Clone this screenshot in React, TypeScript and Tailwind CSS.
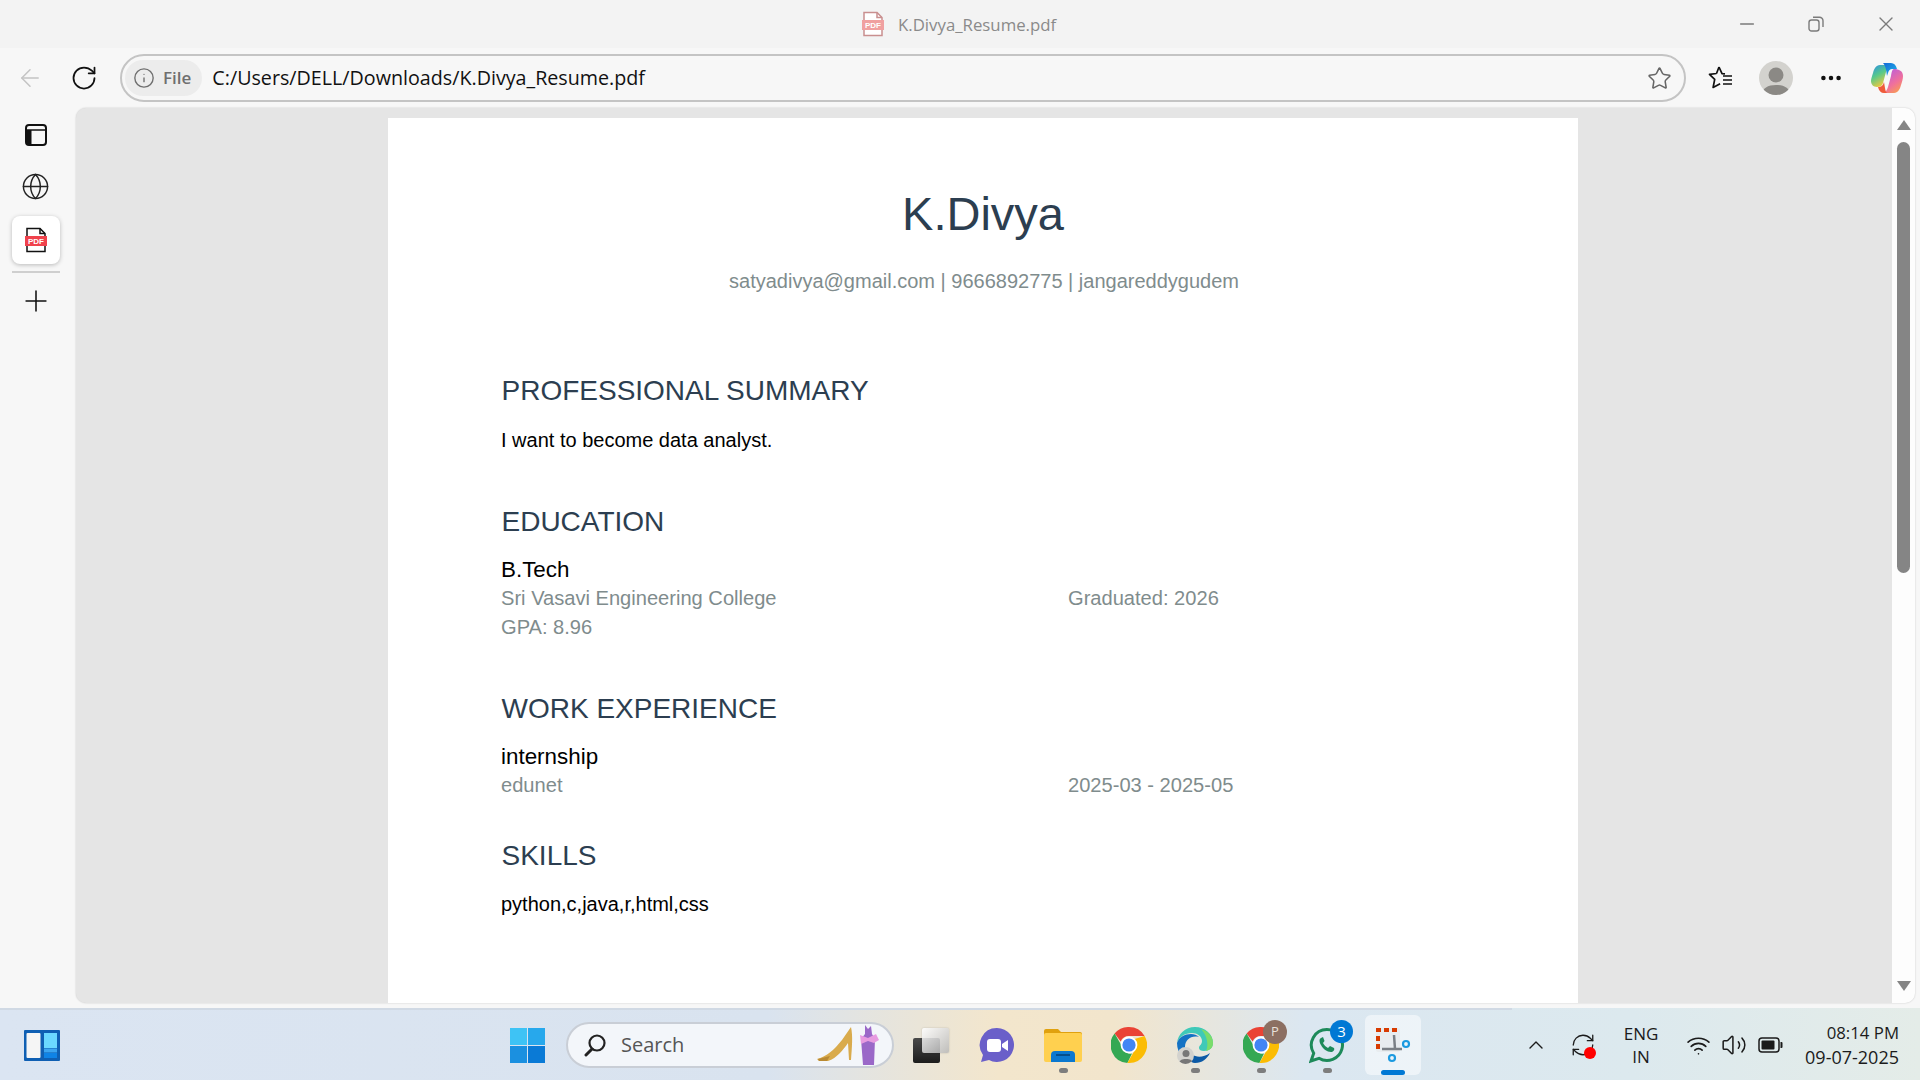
import { ArrowLeft, RotateCw, RefreshCw, Info, Star, Globe, Plus, X, Minus, ChevronUp, Wifi, Volume2, MoreHorizontal } from 'lucide-react'
import type { ReactNode } from 'react'

const uiFont = 'font-["Open_Sans",sans-serif]'

const PdfBadge = ({ muted = false }: { muted?: boolean }) => (
  <svg width="24" height="26" viewBox="0 0 24 26" fill="none">
    <path d="M3 1.500h13l5 5v18H3z" fill="#fff" stroke={muted ? '#c98f8f' : '#111'} strokeWidth="1.500" />
    <path d="M16 1.500v5h5" stroke={muted ? '#c98f8f' : '#111'} strokeWidth="1.500" />
    <rect x="1" y="9" width="22" height="10" fill={muted ? '#f0a0a0' : '#f0424c'} />
    <text x="12" y="17" textAnchor="middle" fontSize="8" fontWeight="700" fontFamily="'Liberation Sans', sans-serif" fill="#fff">PDF</text>
  </svg>
)

const Copilot = () => (
  <svg width="34" height="32" viewBox="0 0 34 32">
    <defs>
      <linearGradient id="cpA" x1="0" y1="0" x2="0.5" y2="1">
        <stop offset="0" stopColor="#2a8fe8" />
        <stop offset="0.5" stopColor="#57c98a" />
        <stop offset="1" stopColor="#f5c93c" />
      </linearGradient>
      <linearGradient id="cpB" x1="0.2" y1="0" x2="0.8" y2="1">
        <stop offset="0" stopColor="#b65ce0" />
        <stop offset="0.6" stopColor="#f0709c" />
        <stop offset="1" stopColor="#f9a04c" />
      </linearGradient>
      <linearGradient id="cpC" x1="0" y1="0" x2="1" y2="1">
        <stop offset="0" stopColor="#1468d8" />
        <stop offset="1" stopColor="#22b8e8" />
      </linearGradient>
    </defs>
    <path d="M10 3h10c-2 1-3 3-4 7l-3 11c-1 3-3 4-6 4-4 0-6-3-6-6 0-2 1-5 2-8 1-4 3-8 7-8z" fill="url(#cpA)" />
    <path d="M24 7c5 0 9 2 9 7 0 3-1 6-2 9-1 4-3 8-7 8H13c3-1 4-3 5-6l3-11c.5-3 1-7 3-7z" fill="url(#cpB)" />
    <path d="M13 1h8c3 0 5 2 6 6h-5c-2 0-3 1-4 4l-1 3c-.5-4-1-10-4-13z" fill="url(#cpC)" />
    <path d="M8 25c3 0 5-1 6-5l1 6c.5 3 1 5 3 5h-4c-3 0-5-2-6-6z" fill="#ef5b3a" />
  </svg>
)

const ChromeIcon = () => (
  <svg width="36" height="36" viewBox="0 0 36 36">
    <path d="M18 0a18 18 0 0 1 15.600 9H18a9 9 0 0 0-8.300 5.500L3.600 6.600A18 18 0 0 1 18 0z" fill="#ea4335" />
    <path d="M3.600 6.600l7.900 13.600A8 8 0 0 0 21 26.500l-4.600 9.400A18 18 0 0 1 3.600 6.600z" fill="#34a853" />
    <path d="M33.600 9A18 18 0 0 1 16.400 35.900l7.900-13.600A8 8 0 0 0 23.600 12z" fill="#fbbc04" />
    <circle cx="18" cy="18" r="8.400" fill="#fff" />
    <circle cx="18" cy="18" r="6.600" fill="#4285f4" />
  </svg>
)

const TaskIcon = ({ children, dot = false, active = false }: { children: ReactNode; dot?: boolean; active?: boolean }) => (
  <div className={`relative mx-[5px] flex h-[60px] w-[56px] items-center justify-center rounded-md ${active ? 'bg-white/50' : ''}`}>
    {children}
    {dot && <span className="absolute bottom-[2px] h-[5px] w-[9px] rounded-full bg-[#7d7d7d]" />}
    {active && <span className="absolute bottom-0 h-[5px] w-[24px] rounded-full bg-[#0078d4]" />}
  </div>
)

const Section = ({ title, className, children }: { title: string; className: string; children: ReactNode }) => (
  <section>
    <h2 className={`pl-[0.5px] text-[28px] leading-[32px] text-[#2c3e50] ${className}`}>{title}</h2>
    {children}
  </section>
)

const Entry = ({ title, sub, right, extra }: { title: string; sub: string; right: string; extra?: string }) => (
  <div className="mt-[17px] leading-[29px]">
    <div className="text-[22.4px] text-black">{title}</div>
    <div className="grid grid-cols-[567px_1fr] text-[20.1px] text-[#7f8c8d]">
      <span>{sub}</span>
      <span>{right}</span>
    </div>
    {extra && <div className="text-[20.1px] text-[#7f8c8d]">{extra}</div>}
  </div>
)

export default function App() {
  return (
    <div className={`flex h-[1080px] w-[1920px] flex-col overflow-hidden bg-[#f7f7f7] ${uiFont}`}>
      {/* Title bar */}
      <header className="flex h-12 shrink-0 items-center bg-[#f3f3f3]">
        <div className="flex flex-1 items-center pl-[861px]">
          <PdfBadge muted />
          <span className="ml-[13px] pt-[2px] text-[16.8px] text-[#8a8a8a]">K.Divya_Resume.pdf</span>
        </div>
        <div className="flex items-center pr-[22px] text-[#7b7b7b]">
          <Minus size={22} strokeWidth={1.4} />
          <svg className="ml-[50px]" width="16" height="16" viewBox="0 0 16 16" fill="none" stroke="currentColor" strokeWidth="1.400">
            <rect x="1" y="4" width="10" height="11" rx="2.500" />
            <path d="M5 1.200h6.500A3.500 3.500 0 0 1 15 4.700V11" />
          </svg>
          <X className="ml-[50px]" size={24} strokeWidth={1.4} />
        </div>
      </header>

      {/* Toolbar */}
      <div className="flex h-[60px] shrink-0 items-center">
        <ArrowLeft className="ml-[16px] text-[#c4c4c4]" size={28} strokeWidth={1.3} />
        <RotateCw className="ml-[26px] text-[#111]" size={28} strokeWidth={1.5} />
        <div className="ml-[22px] flex h-[48px] w-[1566px] items-center rounded-full border-2 border-[#c4c4c4] bg-[#f7f7f7] pl-[3px] pr-[12px]">
          <div className="flex h-[36px] items-center gap-[8px] rounded-full bg-[#ececec] px-[8px] text-[#6f6f6f]">
            <Info size={22} strokeWidth={1.5} />
            <span className="pr-[3px] text-[17px] font-semibold">File</span>
          </div>
          <span className="ml-[10px] flex-1 text-[19.7px] text-[#111]">C:/Users/DELL/Downloads/K.Divya_Resume.pdf</span>
          <Star className="text-[#666]" size={25} strokeWidth={1.5} />
        </div>
        <svg className="ml-[22px]" width="26" height="26" viewBox="0 0 26 26" fill="none" stroke="#111" strokeWidth="1.700">
          <path d="M11 2l3 6.600 3 .3M8.500 8.500l-7 .8 5.200 5-1.600 8.200 7-3.800M11 2L8.500 8.500" strokeLinejoin="round" />
          <path d="M15 11h9M15 15h9M15 19h9" />
        </svg>
        <div className="ml-[25px] flex h-[34px] w-[34px] items-end justify-center overflow-hidden rounded-full bg-[#d3d2ce]">
          <svg width="30" height="30" viewBox="0 0 30 30" fill="#8b8985">
            <circle cx="15" cy="10" r="7.500" />
            <path d="M1 30c0-7 6-10 14-10s14 3 14 10z" />
          </svg>
        </div>
        <MoreHorizontal className="ml-[25px] text-[#111]" size={26} strokeWidth={2.2} />
        <div className="ml-[26px]">
          <Copilot />
        </div>
      </div>

      {/* Body */}
      <div className="flex min-h-0 flex-1">
        <aside className="flex w-[76px] shrink-0 flex-col items-center pr-[5px]">
          <svg className="mt-[16px]" width="22" height="22" viewBox="0 0 22 22" fill="none" stroke="#111" strokeWidth="2">
            <rect x="1" y="1" width="20" height="20" rx="3" />
            <path d="M2 6h18" strokeWidth="1.500" />
            <rect x="1.500" y="6" width="5" height="14" fill="#111" stroke="none" />
          </svg>
          <Globe className="mt-[26px]" size={29} strokeWidth={1.2} color="#222" />
          <div className="mt-[15px] flex h-[48px] w-[48px] items-center justify-center rounded-lg bg-white shadow-[0_1px_4px_rgba(0,0,0,0.25)]">
            <PdfBadge />
          </div>
          <div className="mt-[7px] h-[2px] w-[48px] bg-[#cfcfcf]" />
          <Plus className="mt-[11px] text-[#111]" size={34} strokeWidth={1.1} />
        </aside>

        <main className="mb-[5px] mr-[5px] flex min-w-0 flex-1 overflow-hidden rounded-[10px] bg-[#e5e5e5] shadow-[0_0_2px_rgba(0,0,0,0.2)]">
          <div className="flex min-w-0 flex-1 justify-start pl-[312px] pt-[10px]">
            <article className='h-full w-[1190px] bg-white pl-[113px] pt-[72px] font-["Liberation_Sans",Arial,sans-serif]'>
              <div className="w-[966px] text-center">
                <h1 className="pr-[2px] text-[47px] leading-[48px] text-[#2c3e50]">K.Divya</h1>
                <p className="mt-[31px] text-[20px] leading-[24px] text-[#7f8c8d]">satyadivya@gmail.com | 9666892775 | jangareddygudem</p>
              </div>
              <Section title="PROFESSIONAL SUMMARY" className="mt-[82px]">
                <p className="mt-[21px] text-[20px] leading-[24px] text-black">I want to become data analyst.</p>
              </Section>
              <Section title="EDUCATION" className="mt-[54px]">
                <Entry title="B.Tech" sub="Sri Vasavi Engineering College" right="Graduated: 2026" extra="GPA: 8.96" />
              </Section>
              <Section title="WORK EXPERIENCE" className="mt-[51px]">
                <Entry title="internship" sub="edunet" right="2025-03 - 2025-05" />
              </Section>
              <Section title="SKILLS" className="mt-[40px]">
                <p className="mt-[20px] text-[20px] leading-[24px] text-black">python,c,java,r,html,css</p>
              </Section>
            </article>
          </div>
          {/* Scrollbar */}
          <div className="flex w-[23px] shrink-0 flex-col items-center bg-[#fdfdfd] pt-[12px]">
            <div className="h-0 w-0 border-x-[7px] border-b-[10px] border-x-transparent border-b-[#858585]" />
            <div className="mt-[12px] h-[431px] w-[13px] rounded-full bg-[#858585]" />
            <div className="mb-[12px] mt-auto h-0 w-0 border-x-[7px] border-t-[10px] border-x-transparent border-t-[#858585]" />
          </div>
        </main>
      </div>

      {/* Taskbar */}
      <footer className="flex h-[72px] shrink-0 flex-col bg-[linear-gradient(90deg,#dbe5f2_0%,#d9e3ef_40%,#f3e6cc_52%,#f2e5cc_58%,#dbe7f1_68%,#dce9ee_85%,#e4ece8_100%)]">
        <div className="h-[2px] w-[1512px] shrink-0 bg-[#d0d9e4]" />
        <div className="flex min-h-0 flex-1 items-center">
          <svg className="ml-[24px]" width="36" height="31" viewBox="0 0 36 31">
            <rect width="36" height="31" rx="1" fill="#0f5fb3" />
            <rect x="2.500" y="3" width="14" height="25" rx="1" fill="#f5f5f5" />
            <rect x="20" y="3" width="13" height="15" fill="#6bd8ff" />
            <rect x="20" y="18.500" width="13" height="4" fill="#3ba4f0" />
            <rect x="20" y="23" width="13" height="5" fill="#0f83e6" />
          </svg>
          <svg className="ml-[450px]" width="35" height="35" viewBox="0 0 35 35">
            <rect width="17" height="17" fill="#3ec3f5" />
            <rect x="18" width="17" height="17" fill="#27a8ec" />
            <rect y="18" width="17" height="17" fill="#1b90e0" />
            <rect x="18" y="18" width="17" height="17" fill="#0a7ad6" />
          </svg>
          <div className="ml-[21px] flex h-[46px] w-[328px] items-center rounded-full border-2 border-[#c9ced6] bg-[#f3f6fa] pl-[15px] pr-[10px]">
            <svg width="24" height="24" viewBox="0 0 24 24" fill="none" stroke="#222" strokeWidth="2.200">
              <circle cx="14" cy="10" r="7.500" />
              <path d="M9 16l-6 6" strokeWidth="3" strokeLinecap="round" />
            </svg>
            <span className="ml-[14px] flex-1 text-[20px] text-[#555]">Search</span>
            <svg width="66" height="42" viewBox="0 0 66 42">
              <path d="M1 35c9-2 17-9 25-19l9-13c2 9 1 20 0 33h-2l-1-17c-5 7-11 15-20 18H3z" fill="#d9ab4c" />
              <path d="M2 35l12-3-3 5H3z" fill="#b98a33" />
              <path d="M49 1l3 4 3-3 1 8 3 5-1 26H47l-2-26 4-5z" fill="#9a68c8" />
              <path d="M44 11l8 3 8-4 3 6-5 3-6-2-7 3z" fill="#e79be0" />
            </svg>
          </div>
          <div className="ml-[4px] flex items-center">
            <TaskIcon>
              <div className="relative h-[35px] w-[36px]">
                <div className="absolute bottom-0 left-0 h-[25px] w-[27px] rounded-[2px] bg-[linear-gradient(180deg,#4a4a4a,#1c1c1c)]" />
                <div className="absolute right-0 top-0 h-[25px] w-[27px] rounded-[2px] bg-[linear-gradient(135deg,#ffffffe0,#b5b5b5d0)] shadow-[0_0_2px_rgba(0,0,0,0.2)]" />
              </div>
            </TaskIcon>
            <TaskIcon>
              <svg width="36" height="36" viewBox="0 0 36 36">
                <path d="M18 1a17 17 0 1 1-8 32l-8 2 2-7A17 17 0 0 1 18 1z" fill="#6a5fc9" />
                <rect x="8" y="12" width="14" height="13" rx="3" fill="#fff" />
                <path d="M23 17l6-4v11l-6-4z" fill="#fff" />
              </svg>
            </TaskIcon>
            <TaskIcon dot>
              <svg width="38" height="34" viewBox="0 0 38 34">
                <path d="M0 3a2 2 0 0 1 2-2h12l3 3h19a2 2 0 0 1 2 2v4H0z" fill="#e0a10e" />
                <rect y="5" width="38" height="29" rx="2" fill="#ffd04f" />
                <path d="M7 34v-7a4 4 0 0 1 4-4h16a4 4 0 0 1 4 4v7z" fill="#0b78cf" />
                <rect x="12" y="26" width="14" height="2" fill="#054e8c" />
              </svg>
            </TaskIcon>
            <TaskIcon>
              <ChromeIcon />
            </TaskIcon>
            <TaskIcon dot>
              <div className="relative">
                <svg width="36" height="36" viewBox="0 0 36 36">
                  <path d="M18 0c10 0 18 7 18 16 0 5-4 8-9 8-3 0-5-1-5-3 0-3 3-3 3-7 0-5-5-8-10-8C8 6 2 10 0 16 1 7 8 0 18 0z" fill="#3fc9b8" />
                  <path d="M0 16c2-6 8-9 14-9 3 0 6 1 8 3-8-2-14 3-14 10 0 7 6 14 13 15C9 36 0 28 0 16z" fill="#1472c4" />
                  <path d="M11 22c2 7 12 11 22 4-3 6-8 10-15 10-5 0-9-6-7-14z" fill="#0c5aa6" />
                  <path d="M24 2c7 2 12 7 12 14 0 5-3 7-7 8 3-6 1-16-5-22z" fill="#7bdc6a" />
                </svg>
                <div className="absolute -bottom-[1px] left-0 flex h-[17px] w-[17px] items-end justify-center overflow-hidden rounded-full bg-[#d3d2ce]">
                  <svg width="14" height="15" viewBox="0 0 14 15" fill="#777"><circle cx="7" cy="4.500" r="3.500" /><path d="M0 15c0-4 3-5 7-5s7 1 7 5z" /></svg>
                </div>
              </div>
            </TaskIcon>
            <TaskIcon dot>
              <div className="relative">
                <ChromeIcon />
                <div className="absolute -right-[8px] -top-[7px] flex h-[24px] w-[24px] items-center justify-center rounded-full bg-[#8c6f62] text-[13px] text-[#e9e0da]">P</div>
              </div>
            </TaskIcon>
            <TaskIcon dot>
              <div className="relative">
                <svg width="36" height="37" viewBox="0 0 36 37" fill="none">
                  <path d="M18 2.500a15.500 15.500 0 1 1-8 28.800L2 34l2.700-7.800A15.500 15.500 0 0 1 18 2.500z" stroke="#1d8a5a" strokeWidth="3" />
                  <path d="M12 11c-2 1-2 4 0 7 2 4 6 7 10 7 2 0 4-2 3-4l-4-2-2 2c-2-1-4-3-5-5l1.500-2-1.500-4z" fill="#1d8a5a" />
                </svg>
                <div className="absolute -right-[8px] -top-[7px] flex h-[23px] w-[23px] items-center justify-center rounded-full bg-[#0078d4] text-[15px] text-white">3</div>
              </div>
            </TaskIcon>
            <TaskIcon active>
              <svg width="36" height="36" viewBox="0 0 36 36" fill="none">
                <rect x="1" y="1" width="24" height="24" rx="2" fill="#e8ecef" />
                <path d="M1 1h5v4H1zM9 1h5v4H9zM17 1h5v4h-5zM1 9h4v5H1zM1 17h4v5H1z" fill="#d83b01" />
                <path d="M19 8l1 14M7 22h20" stroke="#7a7f85" strokeWidth="2.500" />
                <circle cx="31" cy="17" r="3" stroke="#1b9ae0" strokeWidth="2.200" />
                <circle cx="17" cy="31" r="3" stroke="#1b9ae0" strokeWidth="2.200" />
              </svg>
            </TaskIcon>
          </div>

          <div className="ml-auto flex items-center pr-[21px] text-[#1b1b1b]">
            <ChevronUp size={24} strokeWidth={1.4} />
            <div className="relative ml-[22px] h-[26px] w-[26px]">
              <RefreshCw size={26} strokeWidth={1.2} />
              <span className="absolute -bottom-[1px] right-0 h-[12px] w-[12px] rounded-full bg-[#f00]" />
            </div>
            <div className="ml-[20px] w-[50px] text-center text-[17px] leading-[23px]">
              <div>ENG</div>
              <div>IN</div>
            </div>
            <Wifi className="ml-[20px]" size={25} strokeWidth={1.6} />
            <Volume2 className="ml-[10px]" size={26} strokeWidth={1.4} />
            <svg className="ml-[11px]" width="25" height="16" viewBox="0 0 25 16" fill="none">
              <rect x="1" y="1" width="20" height="14" rx="3" stroke="#1b1b1b" strokeWidth="1.500" />
              <rect x="3.500" y="3.500" width="13" height="9" rx="1" fill="#1b1b1b" />
              <path d="M22.500 5h1a1 1 0 0 1 1 1v4a1 1 0 0 1-1 1h-1z" fill="#1b1b1b" />
            </svg>
            <div className="ml-[22px] w-[94px] text-right leading-[24px]">
              <div className="text-[16.8px]">08:14 PM</div>
              <div className="whitespace-nowrap text-[18px]">09-07-2025</div>
            </div>
          </div>
        </div>
      </footer>
    </div>
  )
}
